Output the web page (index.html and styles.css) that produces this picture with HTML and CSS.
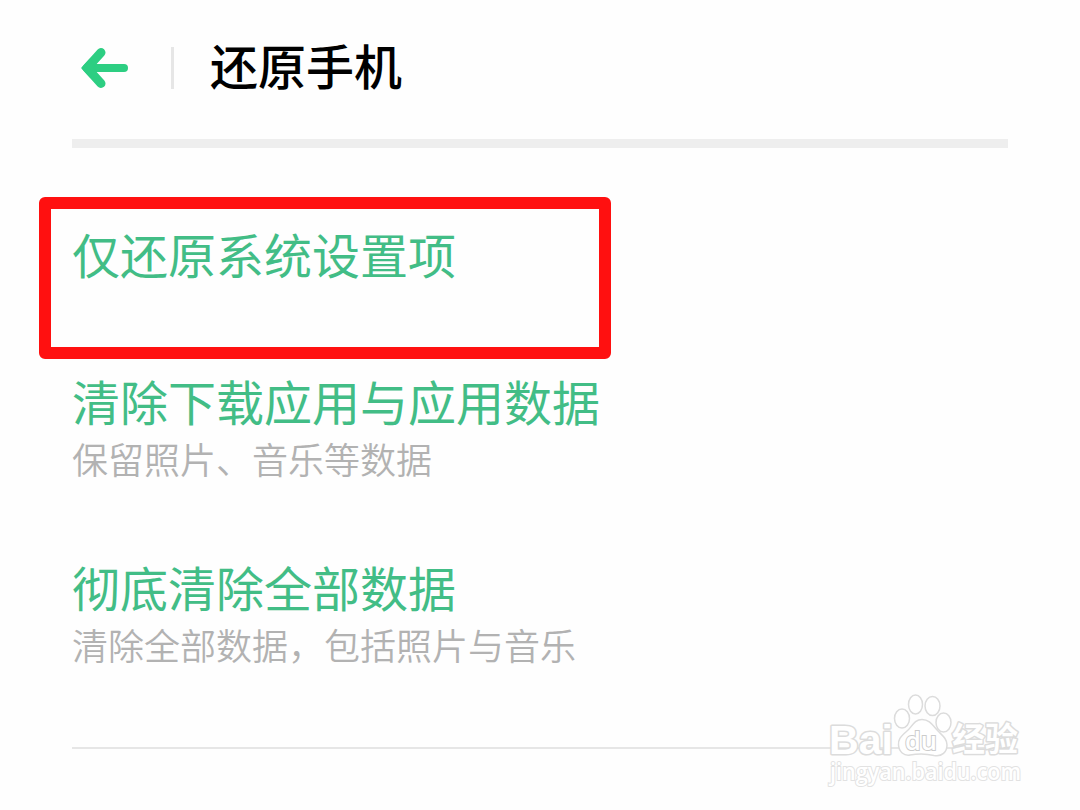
FILE: index.html
```
<!DOCTYPE html>
<html lang="zh-CN">
  <head>
    <meta charset="UTF-8" />
    <meta name="viewport" content="width=device-width, initial-scale=1.0" />
    <title>还原手机</title>
    <link rel="stylesheet" href="styles.css">
  </head>
  <body>
    <header class="header">
      <a href="#" class="back" aria-label="返回">
        <svg width="48" height="42" viewBox="0 0 48 42">
          <path d="M8 21H43" />
          <path class="head" d="M20 5.500L6 21L20 36.500" />
          <path class="tip" d="M1 21L9 12.500L14 21L9 29.500Z" />
        </svg>
      </a>
      <span class="divider"></span>
      <h1>还原手机</h1>
    </header>

    <main class="options">
      <div class="option highlight">
        <h2>仅还原系统设置项</h2>
      </div>
      <div class="option">
        <h2>清除下载应用与应用数据</h2>
        <p>保留照片、音乐等数据</p>
      </div>
      <div class="option">
        <h2>彻底清除全部数据</h2>
        <p>清除全部数据，包括照片与音乐</p>
      </div>
    </main>

    <svg class="watermark" width="220" height="110" viewBox="820 685 220 110">
      <g class="mark">
        <text x="829" y="753.5" font-size="40" textLength="64" lengthAdjust="spacingAndGlyphs" class="bold">Bai</text>
        <ellipse cx="902" cy="718.5" rx="7.5" ry="9.5" />
        <ellipse cx="915.5" cy="704.5" rx="7" ry="9.5" />
        <ellipse cx="932.5" cy="706" rx="7.5" ry="9.5" />
        <ellipse cx="943.5" cy="722.5" rx="7.5" ry="9.5" />
        <path d="M922 719.5C914 719.5 912 727 907 731C900 737 898 740 898.500 745C899 752 904 756 910 755C918 753.500 926 753.500 934 755.500C942 757 947 752 947 745C947 739 943 736 938 731C933 726 930 719.500 922 719.500Z" />
        <text x="905" y="750" font-size="26" textLength="32" lengthAdjust="spacingAndGlyphs" class="du">du</text>
        <text x="952" y="751" font-size="33" textLength="66" lengthAdjust="spacingAndGlyphs" class="bold cjk">经验</text>
      </g>
      <text x="830" y="780" font-size="23" textLength="191" lengthAdjust="spacingAndGlyphs" class="url">jingyan.baidu.com</text>
    </svg>
  </body>
</html>
```
FILE: styles.css
```
:root {
  --green: #42bd86;
  --arrow: #2dce82;
  --gray: #b2b2b2;
  --line: #e6e6e6;
}

* {
  margin: 0;
  padding: 0;
  box-sizing: border-box;
}

body {
  height: 810px;
  background-color: #fefefe;
  font-family: "Noto Sans CJK SC", sans-serif;
  overflow: hidden;
}

.header {
  display: flex;
  align-items: center;
  height: 148px;
  margin: 0 72px;
  padding: 0 0 3px 9px;
  border-bottom: 9px solid #eeeeee;
}

.back {
  display: flex;
}

.back svg {
  fill: none;
  stroke: var(--arrow);
  stroke-width: 8;
  stroke-linecap: round;
  stroke-linejoin: round;
}

.back .head {
  stroke-width: 9;
}

.back .tip {
  fill: var(--arrow);
  stroke-width: 1.5;
}

.divider {
  width: 3px;
  height: 42px;
  margin: 0 36px 0 42px;
  background-color: var(--line);
}

.header h1 {
  padding-bottom: 8px;
  font-size: 48px;
  font-weight: 500;
  line-height: 60px;
  color: #000000;
}

.options {
  margin: 49px 72px 0;
  padding-bottom: 77px;
  border-bottom: 2px solid var(--line);
}

.option {
  margin-bottom: 70px;
}

.option:last-child {
  margin-bottom: 0;
}

.option h2 {
  font-size: 48px;
  font-weight: 400;
  line-height: 64px;
  color: var(--green);
}

.option p {
  font-size: 36px;
  font-weight: 350;
  line-height: 52px;
  color: var(--gray);
}

.highlight {
  width: 572px;
  height: 162px;
  margin: 0 0 9px -33px;
  padding: 12px 0 0 21px;
  border: 12px solid #ff1010;
  border-radius: 6px;
}

.watermark {
  position: absolute;
  left: 820px;
  top: 685px;
  font-family: "Liberation Sans", sans-serif;
}

.mark {
  fill: #ffffff;
  stroke: #dcdcdc;
  stroke-width: 1.5;
}

.mark .bold {
  font-weight: 700;
  stroke-width: 3;
  stroke-linejoin: round;
  paint-order: stroke;
}

.mark .cjk {
  font-family: "Noto Sans CJK SC", sans-serif;
}

.mark .du {
  font-family: "Open Sans", sans-serif;
  font-weight: 600;
  stroke: #cccccc;
  stroke-width: 2;
  paint-order: stroke;
}

.url {
  font-family: "Open Sans", sans-serif;
  font-weight: 600;
  fill: #ffffff;
  stroke: #e2e2e2;
  stroke-width: 2;
  paint-order: stroke;
}
```
